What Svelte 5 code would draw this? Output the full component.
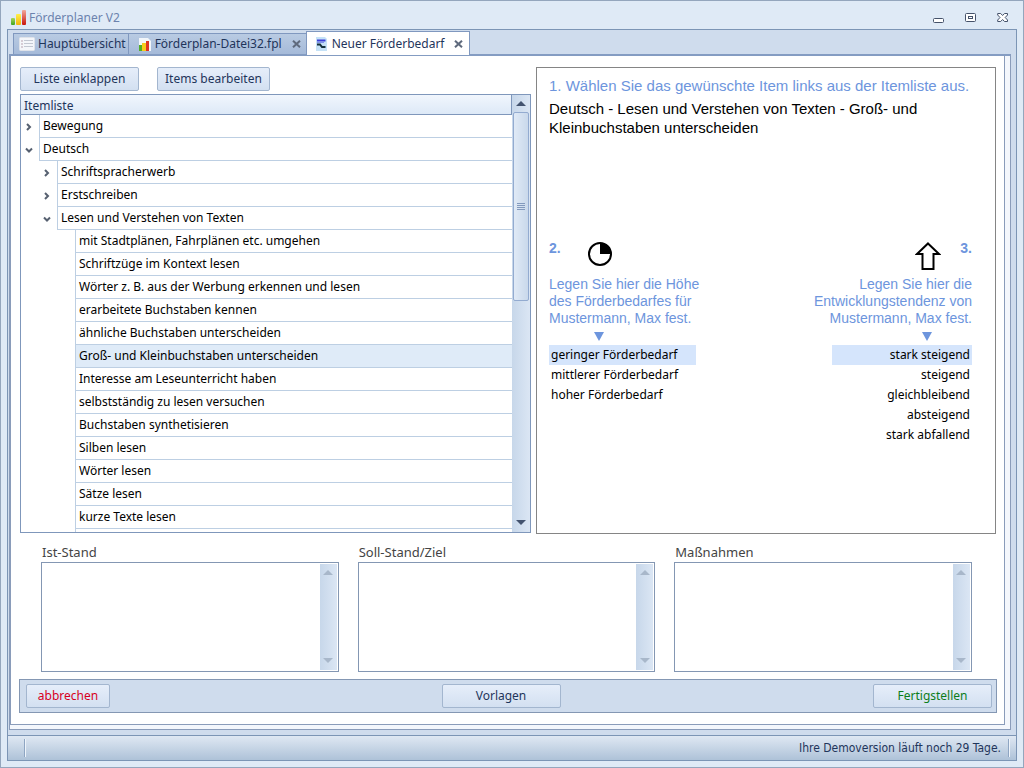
<script>
  let selected = $state('Groß- und Kleinbuchstaben unterscheiden');
  let need = $state('geringer Förderbedarf');
  let trend = $state('stark steigend');

  const rows = [
    { text: 'Bewegung', level: 0, open: false },
    { text: 'Deutsch', level: 0, open: true },
    { text: 'Schriftspracherwerb', level: 1, open: false },
    { text: 'Erstschreiben', level: 1, open: false },
    { text: 'Lesen und Verstehen von Texten', level: 1, open: true },
    { text: 'mit Stadtplänen, Fahrplänen etc. umgehen', level: 2, leaf: true },
    { text: 'Schriftzüge im Kontext lesen', level: 2, leaf: true },
    { text: 'Wörter z. B. aus der Werbung erkennen und lesen', level: 2, leaf: true },
    { text: 'erarbeitete Buchstaben kennen', level: 2, leaf: true },
    { text: 'ähnliche Buchstaben unterscheiden', level: 2, leaf: true },
    { text: 'Groß- und Kleinbuchstaben unterscheiden', level: 2, leaf: true },
    { text: 'Interesse am Leseunterricht haben', level: 2, leaf: true },
    { text: 'selbstständig zu lesen versuchen', level: 2, leaf: true },
    { text: 'Buchstaben synthetisieren', level: 2, leaf: true },
    { text: 'Silben lesen', level: 2, leaf: true },
    { text: 'Wörter lesen', level: 2, leaf: true },
    { text: 'Sätze lesen', level: 2, leaf: true },
    { text: 'kurze Texte lesen', level: 2, leaf: true },
    { text: '', level: 2, leaf: true }
  ];
  const needs = ['geringer Förderbedarf', 'mittlerer Förderbedarf', 'hoher Förderbedarf'];
  const trends = ['stark steigend', 'steigend', 'gleichbleibend', 'absteigend', 'stark abfallend'];
  const fields = [
    { id: 'ist', label: 'Ist-Stand' },
    { id: 'soll', label: 'Soll-Stand/Ziel' },
    { id: 'mass', label: 'Maßnahmen' }
  ];
</script>

{#snippet bars()}
  <svg width="16" height="16" viewBox="0 0 16 16" aria-hidden="true">
    <defs>
      <linearGradient id="g1" x2="0" y2="1"><stop stop-color="#a9d65c" /><stop offset="1" stop-color="#3fa51d" /></linearGradient>
      <linearGradient id="g2" x2="0" y2="1"><stop stop-color="#fff04a" /><stop offset="1" stop-color="#f3b50c" /></linearGradient>
      <linearGradient id="g3" x2="0" y2="1"><stop stop-color="#f2a79a" /><stop offset="1" stop-color="#c9150b" /></linearGradient>
    </defs>
    <rect x="0" y="8" width="4" height="7" rx="1" fill="url(#g1)" />
    <rect x="5" y="4" width="5" height="11" rx="1" fill="url(#g2)" />
    <rect x="11" y="0" width="4" height="15" rx="1" fill="url(#g3)" />
  </svg>
{/snippet}

{#snippet cross()}
  <svg width="9" height="8" viewBox="0 0 9 8" aria-hidden="true"><path d="M1 .7 8 7.3M8 .7 1 7.3" stroke="#5f6a7d" stroke-width="2" fill="none" /></svg>
{/snippet}

{#snippet tri(up)}
  <svg width="10" height="6" viewBox="0 0 10 6" aria-hidden="true"><path d={up ? 'M5 0 10 5H0z' : 'M0 0H10L5 5z'} fill="currentColor" /></svg>
{/snippet}

<div class="window">
  <header class="titlebar">
    {@render bars()}
    <span class="title">Förderplaner V2</span>
    <button aria-label="Minimieren"><svg width="12" height="12" viewBox="0 0 12 12"><rect x=".5" y="6.5" width="10" height="4" rx="1" fill="#fff" stroke="#45526a" /></svg></button>
    <button aria-label="Maximieren"><svg width="12" height="12" viewBox="0 0 12 12"><rect x=".5" y="1.5" width="10" height="8" rx="1" fill="#fff" stroke="#45526a" /><rect x="3.5" y="4.5" width="4" height="2" fill="#fff" stroke="#45526a" /></svg></button>
    <button aria-label="Schließen"><svg width="12" height="12" viewBox="0 0 12 12"><path d="M.7 1.5H3.7L5.6 3.5 7.5 1.5H10.5V3L8.2 5.5 10.5 8V9.5H7.5L5.6 7.5 3.7 9.5H.7V8L3 5.5.7 3z" fill="#fff" stroke="#45526a" /></svg></button>
  </header>

  <div class="frame">
    <nav class="tabs">
      <div class="tab">
        <button class="tabname">
          <svg width="16" height="14" viewBox="0 0 16 14" aria-hidden="true"><rect x=".5" y=".5" width="15" height="13" rx="1" fill="#f4f6fa" stroke="#dfe3ea" /><path d="M2 4h2M2 7h2M2 10h2" stroke="#b9a3b0" stroke-width="1" /><path d="M5 3.500h9M5 6.500h9M5 9.500h9" stroke="#c3c8d2" /></svg>
          Hauptübersicht
        </button>
      </div>
      <div class="tab">
        <button class="tabname">
          <svg width="14" height="15" viewBox="0 0 14 15" aria-hidden="true"><path d="M1 1H10L13 4V14H1z" fill="#f2f6fa" /><rect x="1" y="8" width="3" height="6" fill="#52ad28" /><rect x="4" y="6" width="4" height="8" fill="#f6cb1d" /><rect x="8" y="4" width="3" height="10" fill="#dd3426" /></svg>
          Förderplan-Datei32.fpl
        </button>
        <button class="close" aria-label="Förderplan-Datei32.fpl schließen">{@render cross()}</button>
      </div>
      <div class="tab active">
        <button class="tabname">
          <svg width="14" height="14" viewBox="0 0 14 14" aria-hidden="true"><path d="M1 0H10L12 2V14H1z" fill="#c5e2f7" /><path d="M2 3.500H10.500" stroke="#3b3fd8" stroke-width="2" /><path d="M2 5.500H9" stroke="#8294e8" /><path d="M2 7.500H5L7 10H10.500" stroke="#15313c" stroke-width="2" fill="none" /></svg>
          Neuer Förderbedarf
        </button>
        <button class="close" aria-label="Neuer Förderbedarf schließen">{@render cross()}</button>
      </div>
    </nav>

    <div class="sheet">
      <main class="page">
        <div class="top">
          <section class="left">
            <div class="toolbar">
              <button class="btn wide">Liste einklappen</button>
              <button class="btn">Items bearbeiten</button>
            </div>
            <div class="list">
              <div class="listbody">
                <div class="listhead">Itemliste</div>
                <ul class="tree" role="tree">
                  {#each rows as r}
                    <li role="treeitem" aria-selected={selected === r.text} aria-level={r.level + 1} style:padding-left="{r.level * 18}px">
                      {#if r.leaf}
                        <span class="exp"></span>
                      {:else}
                        <button class="exp" aria-label={r.text + (r.open ? ' einklappen' : ' ausklappen')}>
                          <svg width="8" height="8" viewBox="0 0 8 8"><path d={r.open ? 'M1 2.500 4 5.500 7 2.500' : 'M2 1 5 4 2 7'} fill="none" stroke="#566070" stroke-width="2" /></svg>
                        </button>
                      {/if}
                      <button class="cell" class:sel={selected === r.text} onclick={() => (selected = r.text)}>{r.text}</button>
                    </li>
                  {/each}
                </ul>
              </div>
              <div class="scroll" aria-hidden="true">
                {@render tri(true)}
                <div class="track">
                  <div class="thumb"><i></i><i></i><i></i><i></i></div>
                </div>
                {@render tri(false)}
              </div>
            </div>
          </section>

          <section class="panel">
            <h2>1. Wählen Sie das gewünschte Item links aus der Itemliste aus.</h2>
            <p class="chosen">Deutsch - Lesen und Verstehen von Texten - {selected}</p>
            <div class="choices">
              <div class="choice">
                <div class="chead">
                  <b>2.</b>
                  <svg width="26" height="30" viewBox="0 0 26 30" aria-hidden="true"><circle cx="13" cy="14" r="11" fill="#fff" stroke="#000" stroke-width="2" /><path d="M13 3A11 11 0 0 1 24 14H13z" /></svg>
                </div>
                <p>Legen Sie hier die Höhe<br />des Förderbedarfes für<br />Mustermann, Max fest.</p>
                <div class="mark"><svg width="10" height="10" viewBox="0 0 10 10" aria-hidden="true"><path d="M0 1H10L5 10z" fill="#6d95dd" /></svg></div>
                <ul>
                  {#each needs as n}
                    <li><button class:sel={need === n} onclick={() => (need = n)}>{n}</button></li>
                  {/each}
                </ul>
              </div>
              <div class="choice right">
                <div class="chead">
                  <b>3.</b>
                  <svg width="26" height="30" viewBox="0 0 26 30" aria-hidden="true"><path d="M13 3.500 24 14H18.500V29H7.500V14H2z" fill="#fff" stroke="#000" stroke-width="2" /></svg>
                </div>
                <p>Legen Sie hier die<br />Entwicklungstendenz von<br />Mustermann, Max fest.</p>
                <div class="mark"><svg width="10" height="10" viewBox="0 0 10 10" aria-hidden="true"><path d="M0 1H10L5 10z" fill="#6d95dd" /></svg></div>
                <ul>
                  {#each trends as t}
                    <li><button class:sel={trend === t} onclick={() => (trend = t)}>{t}</button></li>
                  {/each}
                </ul>
              </div>
            </div>
          </section>
        </div>

        <div class="fields">
          {#each fields as f}
            <div class="field">
              <label for={f.id}>{f.label}</label>
              <div class="box">
                <textarea id={f.id}></textarea>
                <div class="scroll off" aria-hidden="true">{@render tri(true)}{@render tri(false)}</div>
              </div>
            </div>
          {/each}
        </div>

        <footer class="actions">
          <div><button class="btn cancel">abbrechen</button></div>
          <div class="middle"><button class="btn wide">Vorlagen</button></div>
          <div class="end"><button class="btn wide done">Fertigstellen</button></div>
        </footer>
      </main>
    </div>

    <div class="status">
      <span class="grip"></span>
      <span class="msg">Ihre Demoversion läuft noch 29 Tage.</span>
      <span class="grip"></span>
    </div>
  </div>
</div>

<style>
  :global(body) { margin: 0; }
  * { box-sizing: border-box; }
  .window {
    display: flex;
    flex-direction: column;
    height: 100vh;
    min-height: 640px;
    padding: 0 6px 6px;
    border: 1px solid #94a6bd;
    background: #dfeaf6;
    color: #1f355b;
    font: 12px/16px "Noto Sans", "DejaVu Sans Condensed", sans-serif;
  }
  button {
    padding: 0;
    border: 0;
    background: none;
    color: inherit;
    font: inherit;
    text-align: left;
  }
  svg { display: block; flex: none; }
  ul, h2, p { margin: 0; padding: 0; list-style: none; font-weight: normal; }

  .titlebar {
    display: flex;
    align-items: center;
    height: 28px;
    flex: none;
    padding: 5px 8px 0 4px;
  }
  .title { flex: 1; margin-left: 2px; color: #6c83ae; }
  .titlebar button { margin-left: 20px; }

  .frame {
    display: flex;
    flex: 1;
    flex-direction: column;
    min-height: 0;
    border: 1px solid #7c95b5;
    background: #cfdced;
  }
  .tabs { display: flex; align-items: flex-end; height: 24px; flex: none; padding-left: 5px; }
  .tab {
    display: flex;
    align-items: center;
    height: 21px;
    padding: 0 5px 0 9px;
    border: 1px solid #8098bf;
    border-width: 1px 1px 0 0;
    background: linear-gradient(#b9cbe3, #a5bad9);
  }
  .tab:first-child { padding: 0 2px 0 5px; border-left-width: 1px; }
  .tabname { display: flex; align-items: center; gap: 3px; white-space: nowrap; }
  .close { margin-left: 10px; }
  .tab.active { position: relative; z-index: 1; height: 24px; padding: 0 6px 0 8px; margin: 0 0 -1px -1px; border-left-width: 1px; background: #fff; }

  .sheet {
    display: flex;
    flex: 1;
    min-height: 0;
    margin: 0 5px 5px 1px;
    padding: 0 5px 4px 0;
    border: 1px solid #8a9cba;
    border-top: 2px solid #849cc2;
    background: #f4f7fc;
  }
  .page {
    display: flex;
    flex: 1;
    flex-direction: column;
    min-width: 0;
    padding: 11px 7px 11px 8px;
    border: 1px solid #8a9cba;
    border-top: 0;
    background: #fff;
  }
  .top {
    display: grid;
    flex: 1;
    grid-template-columns: 511fr 460fr;
    gap: 5px;
    min-height: 0;
    padding: 0 1px;
  }
  .left { display: flex; flex-direction: column; min-height: 0; min-width: 0; }
  .toolbar { display: flex; gap: 18px; margin-bottom: 3px; }
  .btn {
    height: 24px;
    padding: 0 7px;
    border: 1px solid #a3b6cf;
    border-radius: 2px;
    background: linear-gradient(#e6eefa, #d3e0f1);
    text-align: center;
  }
  .btn.wide { width: 119px; }
  .list { display: flex; flex: 1; min-height: 0; margin-bottom: 1px; border: 1px solid #7f97bb; }
  .listbody { display: flex; flex: 1; flex-direction: column; min-width: 0; overflow: hidden; }
  .listhead {
    flex: none;
    height: 20px;
    padding: 3px 3px 0;
    border-bottom: 1px solid #7f97bb;
    border-right: 1px solid #7f97bb;
    background: linear-gradient(#f1f6fd, #dde9f7);
  }
  .tree { flex: 1; min-height: 0; overflow: hidden; color: #000; }
  .tree li { display: flex; height: 23px; }
  .exp { display: flex; flex: none; width: 18px; align-items: center; padding-left: 4px; }
  .cell { flex: 1; padding: 0 3px 1px; border: 1px solid #bdcfe3; border-width: 0 0 1px 1px; }
  .cell.sel { background: #dfebf8; }

  .scroll {
    display: flex;
    flex: none;
    flex-direction: column;
    align-items: center;
    width: 18px;
    padding: 6px 0;
    background: linear-gradient(90deg, #c7d7ea, #dbe6f4);
    color: #43536f;
  }
  .track { display: flex; flex: 1; flex-direction: column; align-self: stretch; padding: 5px 1px; }
  .thumb {
    display: flex;
    flex-direction: column;
    align-items: center;
    justify-content: center;
    gap: 1px;
    height: 47%;
    border: 1px solid #93abd0;
    border-radius: 2px;
    background: linear-gradient(90deg, #e0eaf6, #c9d8eb);
  }
  .thumb i { width: 8px; height: 1px; background: #8299bd; }
  .scroll.off { width: 17px; justify-content: space-between; margin: 1px; color: #a8b7ca; }

  .panel {
    padding: 8px 12px;
    min-width: 0;
    border: 1px solid #858585;
    color: #6d95dd;
    font: 15px/19px "Liberation Sans", Arial, sans-serif;
  }
  h2 { font-size: 15px; }
  .chosen { min-height: 139px; padding-top: 4px; color: #000; max-width: 400px; }
  .choices { display: flex; justify-content: space-between; padding-right: 11px; font-size: 14px; line-height: 17px; }
  .choice { display: flex; flex-direction: column; }
  .choice.right { text-align: right; }
  .chead { display: flex; gap: 26px; height: 42px; padding-top: 6px; }
  .chead b { font-size: 14px; line-height: 16px; }
  .right .chead { flex-direction: row-reverse; gap: 19px; }
  .mark { display: flex; height: 18px; align-items: center; padding-left: 45px; }
  .right .mark { justify-content: flex-end; padding: 0 40px 0 0; }
  .choice ul { width: 147px; color: #000; font: 12px/20px "Noto Sans", "DejaVu Sans Condensed", sans-serif; }
  .right ul { width: 140px; align-self: flex-end; }
  .choice li button { display: block; width: 100%; padding: 0 2px; height: 20px; }
  .right li button { text-align: right; }
  .choice .sel { background: #d5e5fc; }

  .fields { display: grid; flex: none; grid-template-columns: repeat(3, 1fr); gap: 19px; padding: 9px 25px 7px 22px; }
  .field label { display: block; height: 19px; padding: 0 1px; color: #444; font-size: 13px; line-height: 19px; }
  .box { display: flex; height: 110px; border: 1px solid #8497b3; }
  textarea { flex: 1; min-width: 0; padding: 3px; border: 0; outline: 0; resize: none; font: inherit; overflow: hidden; }

  .actions {
    display: grid;
    flex: none;
    grid-template-columns: 1fr auto 1fr;
    align-items: center;
    height: 34px;
    padding: 0 4px 0 6px;
    border: 1px solid #8497b3;
    background: #cfdced;
  }
  .middle { padding-right: 16px; }
  .end { display: flex; justify-content: flex-end; }
  .cancel { width: 84px; color: #d8001c; }
  .done { color: #0b7d1b; }

  .status {
    display: flex;
    flex: none;
    align-items: center;
    height: 25px;
    padding: 0 6px 0 16px;
    border-top: 1px solid #7c95b5;
    background: linear-gradient(#dfe8f3, #aec2d8);
  }
  .grip { width: 2px; height: 18px; border-left: 1px solid #8ea5c2; background: #eef4fb; }
  .msg { flex: 1; padding-right: 7px; font-family: "DejaVu Sans Condensed", "Noto Sans", sans-serif; text-align: right; }
</style>
